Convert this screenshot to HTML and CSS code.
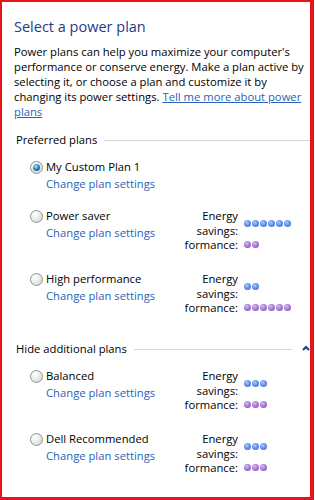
FILE: index.html
```html
<!DOCTYPE html>
<html lang="en">
<head>
    <meta charset="UTF-8">
    <meta name="viewport" content="width=device-width, initial-scale=1.0">
    <title>Power Options</title>
    <link rel="stylesheet" href="styles.css">
</head>
<body>
    <div class="page">
        <h1 class="title">Select a power plan</h1>
        <p class="intro">Power plans can help you maximize your computer's performance or conserve energy. Make a plan active by selecting it, or choose a plan and customize it by changing its power settings. <a href="#">Tell me more about power plans</a></p>

        <div class="section-head first">
            <span>Preferred plans</span>
            <span class="rule"></span>
        </div>

        <div class="plan">
            <span class="radio checked"></span>
            <div class="plan-text">
                <div class="plan-name">My Custom Plan 1</div>
                <a class="plan-link" href="#">Change plan settings</a>
            </div>
        </div>

        <div class="plan">
            <span class="radio"></span>
            <div class="plan-text">
                <div class="plan-name">Power saver</div>
                <a class="plan-link" href="#">Change plan settings</a>
            </div>
            <div class="metrics">
                <div class="metric">
                    <div class="metric-label">Energy savings:</div>
                    <div class="dots"><i class="dot blue"></i><i class="dot blue"></i><i class="dot blue"></i><i class="dot blue"></i><i class="dot blue"></i><i class="dot blue"></i></div>
                </div>
                <div class="metric perf">
                    <div class="metric-label">Performance:</div>
                    <div class="dots"><i class="dot purple"></i><i class="dot purple"></i></div>
                </div>
            </div>
        </div>

        <div class="plan">
            <span class="radio"></span>
            <div class="plan-text">
                <div class="plan-name">High performance</div>
                <a class="plan-link" href="#">Change plan settings</a>
            </div>
            <div class="metrics">
                <div class="metric">
                    <div class="metric-label">Energy savings:</div>
                    <div class="dots"><i class="dot blue"></i><i class="dot blue"></i></div>
                </div>
                <div class="metric perf">
                    <div class="metric-label">Performance:</div>
                    <div class="dots"><i class="dot purple"></i><i class="dot purple"></i><i class="dot purple"></i><i class="dot purple"></i><i class="dot purple"></i><i class="dot purple"></i></div>
                </div>
            </div>
        </div>

        <div class="section-head">
            <span>Hide additional plans</span>
            <span class="rule"></span>
            <svg class="chevron" width="8" height="6" viewBox="0 0 8 6"><polyline points="1,5 4,2 7,5" fill="none" stroke="#1e3a8a" stroke-width="2"/></svg>
        </div>

        <div class="plan">
            <span class="radio"></span>
            <div class="plan-text">
                <div class="plan-name">Balanced</div>
                <a class="plan-link" href="#">Change plan settings</a>
            </div>
            <div class="metrics">
                <div class="metric">
                    <div class="metric-label">Energy savings:</div>
                    <div class="dots"><i class="dot blue"></i><i class="dot blue"></i><i class="dot blue"></i></div>
                </div>
                <div class="metric perf">
                    <div class="metric-label">Performance:</div>
                    <div class="dots"><i class="dot purple"></i><i class="dot purple"></i><i class="dot purple"></i></div>
                </div>
            </div>
        </div>

        <div class="plan">
            <span class="radio"></span>
            <div class="plan-text">
                <div class="plan-name">Dell Recommended</div>
                <a class="plan-link" href="#">Change plan settings</a>
            </div>
            <div class="metrics">
                <div class="metric">
                    <div class="metric-label">Energy savings:</div>
                    <div class="dots"><i class="dot blue"></i><i class="dot blue"></i><i class="dot blue"></i></div>
                </div>
                <div class="metric perf">
                    <div class="metric-label">Performance:</div>
                    <div class="dots"><i class="dot purple"></i><i class="dot purple"></i><i class="dot purple"></i></div>
                </div>
            </div>
        </div>
    </div>
</body>
</html>
```

FILE: styles.css
```css
body {
    margin: 0;
    background: #fff;
    font-family: "Segoe UI", "Open Sans", sans-serif;
    font-size: 11.25px;
    color: #000;
}

.page {
    width: 314px;
    height: 500px;
    box-sizing: border-box;
    border: 2px solid #e8141b;
    border-right-width: 4px;
    border-bottom-width: 3px;
    padding: 14px 0 0 12px;
    overflow: hidden;
}

.title {
    margin: 0;
    font-size: 14.5px;
    font-weight: normal;
    line-height: 22px;
    color: #1e3a8a;
}

.intro {
    margin: 6px 0 0;
    width: 296px;
    line-height: 15px;
}

a {
    color: #2a62b8;
}

.section-head {
    display: flex;
    align-items: center;
    margin: 22px 0 11px 2px;
    line-height: 16px;
    white-space: nowrap;
}

.section-head.first {
    margin-top: 13px;
}

.section-head .rule {
    flex: 1;
    height: 1px;
    margin-left: 7px;
    background: #d5d5d5;
}

.chevron {
    flex-shrink: 0;
    margin-left: 10px;
    margin-top: -2px;
}

.plan {
    display: flex;
    align-items: flex-start;
    margin: 0 0 15px 16px;
}

.radio {
    flex-shrink: 0;
    position: relative;
    width: 11px;
    height: 11px;
    margin: 2px 3px 0 0;
    border: 1px solid #8e9192;
    border-radius: 50%;
    background: radial-gradient(circle at 35% 30%, #fff 0, #f1f1f1 35%, #cfcfcf 100%);
}

.radio.checked::after {
    content: "";
    position: absolute;
    left: 2px;
    top: 2px;
    width: 7px;
    height: 7px;
    border-radius: 50%;
    background: radial-gradient(circle at 40% 35%, #b7e3fb 0, #3b86c8 45%, #0f3a6c 100%);
}

.plan-text {
    width: 139px;
    flex-shrink: 0;
}

.plan-name {
    line-height: 16px;
}

.plan-link {
    display: block;
    line-height: 18px;
    text-decoration: none;
    white-space: nowrap;
}

.metrics {
    margin-bottom: 4px;
}

.metric {
    display: flex;
    align-items: center;
}

.metric-label {
    width: 53px;
    display: flex;
    justify-content: flex-end;
    overflow: hidden;
    text-align: right;
    line-height: 15px;
}

.metric.perf {
    margin-top: -1px;
}

.metric.perf .metric-label {
    white-space: nowrap;
}

.dots {
    display: flex;
    gap: 1px;
    margin-left: 6px;
}

.dot {
    width: 7px;
    height: 7px;
    border-radius: 50%;
}

.dot.blue {
    background: radial-gradient(circle at 40% 35%, #b3cdfa 0, #6592ea 45%, #3a68d2 100%);
}

.dot.purple {
    background: radial-gradient(circle at 40% 35%, #dcc0f5 0, #a679d8 45%, #7f4cb8 100%);
}
```
